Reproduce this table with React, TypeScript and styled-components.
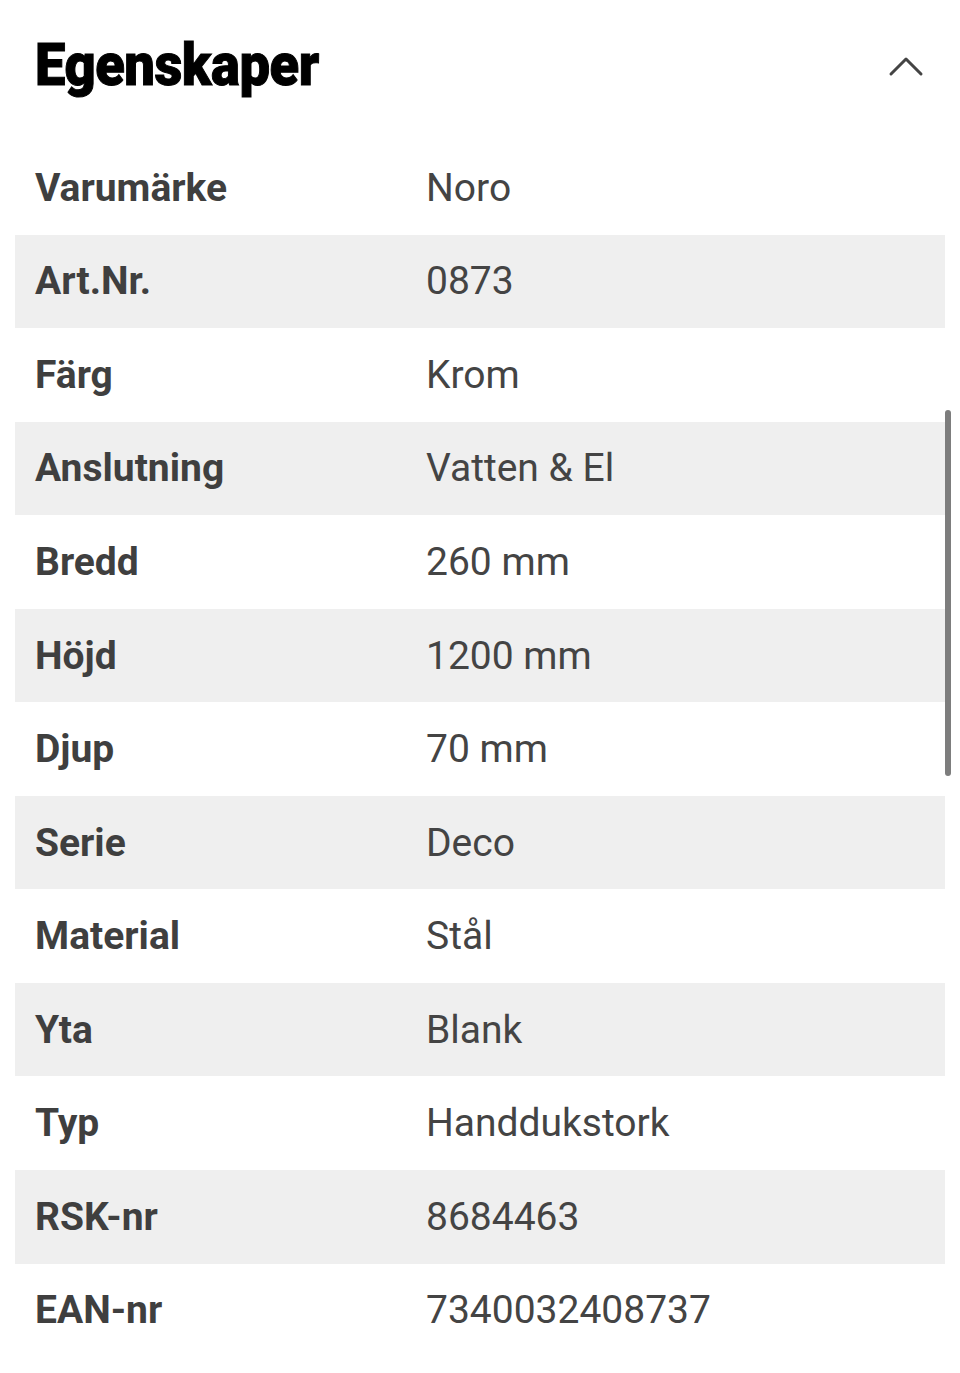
import React from "react";
import styled, { createGlobalStyle } from "styled-components";

const GlobalStyle = createGlobalStyle`
  html, body {
    margin: 0;
    padding: 0;
    background: #ffffff;
  }
  body {
    font-family: Roboto, "Liberation Sans", sans-serif;
  }
`;

const Page = styled.div`
  position: relative;
  width: 960px;
  min-height: 1373px;
  background: #ffffff;
`;

const Header = styled.div`
  display: flex;
  align-items: center;
  justify-content: space-between;
  height: 141px;
  padding: 0 36px 0 35px;
  box-sizing: border-box;
`;

const Title = styled.h2`
  margin: 0 0 12px 0;
  font-family: Roboto, "Liberation Sans", sans-serif;
  font-weight: 900;
  font-size: 59px;
  line-height: 1;
  color: #000000;
  letter-spacing: -0.5px;
  -webkit-text-stroke: 1px #000000;
  display: inline-block;
  transform: scaleX(0.92);
  transform-origin: left center;
`;

const Toggle = styled.button`
  display: flex;
  align-items: center;
  justify-content: center;
  border: 0;
  padding: 0;
  margin: 0 0 10px 0;
  background: transparent;
  width: 36px;
  height: 24px;
`;

const Table = styled.div`
  display: flex;
  flex-direction: column;
  padding: 0 15px;
`;

const Row = styled.div<{ $shaded: boolean }>`
  display: grid;
  grid-template-columns: 392px 1fr;
  align-items: center;
  height: 93.55px;
  padding-left: 20px;
  background: ${(p) => (p.$shaded ? "#efefef" : "transparent")};
  font-size: 39px;
  color: #444444;
`;

const Label = styled.div`
  font-weight: 700;
  color: #3f3f3f;
`;

const Value = styled.div`
  font-weight: 400;
  margin-left: -1px;
`;

const Scrollbar = styled.div`
  position: absolute;
  left: 945px;
  top: 410px;
  width: 6px;
  height: 366px;
  border-radius: 3px;
  background: #7d7d7d;
`;

const rows: [string, string][] = [
  ["Varumärke", "Noro"],
  ["Art.Nr.", "0873"],
  ["Färg", "Krom"],
  ["Anslutning", "Vatten & El"],
  ["Bredd", "260 mm"],
  ["Höjd", "1200 mm"],
  ["Djup", "70 mm"],
  ["Serie", "Deco"],
  ["Material", "Stål"],
  ["Yta", "Blank"],
  ["Typ", "Handdukstork"],
  ["RSK-nr", "8684463"],
  ["EAN-nr", "7340032408737"],
];

export default function App(): JSX.Element {
  return (
    <Page>
      <GlobalStyle />
      <Header>
        <Title>Egenskaper</Title>
        <Toggle aria-label="Fäll ihop">
          <svg width="36" height="22" viewBox="0 0 36 22" fill="none">
            <path d="M3 19 L18 4 L33 19" stroke="#444" strokeWidth="3" strokeLinecap="round" strokeLinejoin="round" />
          </svg>
        </Toggle>
      </Header>
      <Table>
        {rows.map(([label, value], i) => (
          <Row key={label} $shaded={i % 2 === 1}>
            <Label>{label}</Label>
            <Value>{value}</Value>
          </Row>
        ))}
      </Table>
      <Scrollbar />
    </Page>
  );
}
